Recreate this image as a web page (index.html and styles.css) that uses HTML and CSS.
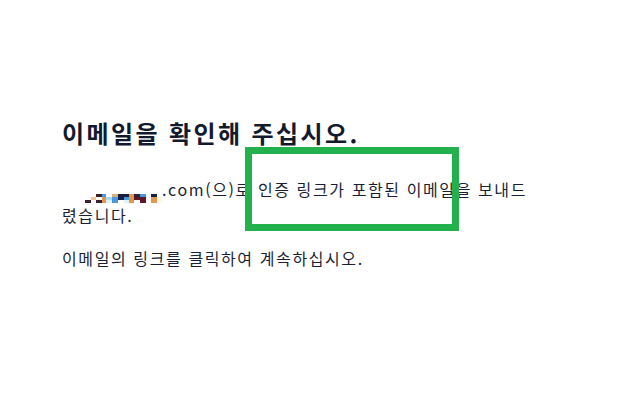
FILE: index.html
```html
<!DOCTYPE html>
<html lang="ko">
<head>
  <meta charset="UTF-8">
  <title>이메일 확인</title>
  <link rel="stylesheet" href="styles.css">
</head>
<body>
  <main class="verify">
    <h1>이메일을 확인해 주십시오.</h1>
    <p>
      <span class="masked">
        <i class="w"></i><i class="w"></i><i class="d"></i><i class="b"></i><i class="w"></i><i class="t"></i><i class="n"></i><i class="n"></i><i class="o"></i><i class="d"></i><i class="b"></i><i class="w"></i><i class="n"></i><i class="w"></i>
        <i class="w"></i><i class="p"></i><i class="w"></i><i class="o"></i><i class="l"></i><i class="b"></i><i class="n"></i><i class="b"></i><i class="o"></i><i class="m"></i><i class="m"></i><i class="w"></i><i class="o"></i><i class="c"></i>
        <i class="d"></i><i class="w"></i><i class="d"></i><i class="o"></i><i class="x"></i><i class="b"></i><i class="w"></i><i class="x"></i><i class="o"></i><i class="w"></i><i class="m"></i><i class="w"></i><i class="o"></i><i class="c"></i>
      </span>.com(으)로 인증 링크가 포함된 이메일을 보내드렸습니다.
    </p>
    <p>이메일의 링크를 클릭하여 계속하십시오.</p>
    <div class="highlight"></div>
  </main>
</body>
</html>
```

FILE: styles.css
```css
body {
  margin: 0;
  background: #fff;
  font-family: "Noto Sans CJK KR", "Noto Sans", sans-serif;
  color: #1a1f36;
}

.verify {
  position: relative;
  width: 470px;
  padding: 115px 0 0 62px;
}

h1 {
  margin: 0 0 26px;
  font-size: 24px;
  font-weight: 700;
  line-height: 36px;
  letter-spacing: 2.4px;
  color: #141a2e;
}

p {
  margin: 0 0 19px;
  font-size: 16px;
  line-height: 24px;
  letter-spacing: 1.6px;
}

/* pixelated e-mail address */
.masked {
  display: inline-grid;
  grid-template-columns: 6px 5px 6px 4px 6px 6px 6px 5px 5px 6px 6px 5px 6px 5px;
  grid-auto-rows: 3px;
  margin-left: 23px;
  vertical-align: -1px;
}

.masked i { display: block; }
.masked .w { background: #fff; }
.masked .d { background: #3a2030; }
.masked .b { background: #4a98dc; }
.masked .t { background: #d8b088; }
.masked .n { background: #17203f; }
.masked .o { background: #e09850; }
.masked .m { background: #5a1828; }
.masked .l { background: #a8dcf0; }
.masked .p { background: #f2c694; }
.masked .c { background: #fff8e0; }
.masked .x { background: #e2f0f8; }

.highlight {
  position: absolute;
  left: 245px;
  top: 147px;
  width: 200px;
  height: 70px;
  border: 7px solid #22b14c;
}
```
